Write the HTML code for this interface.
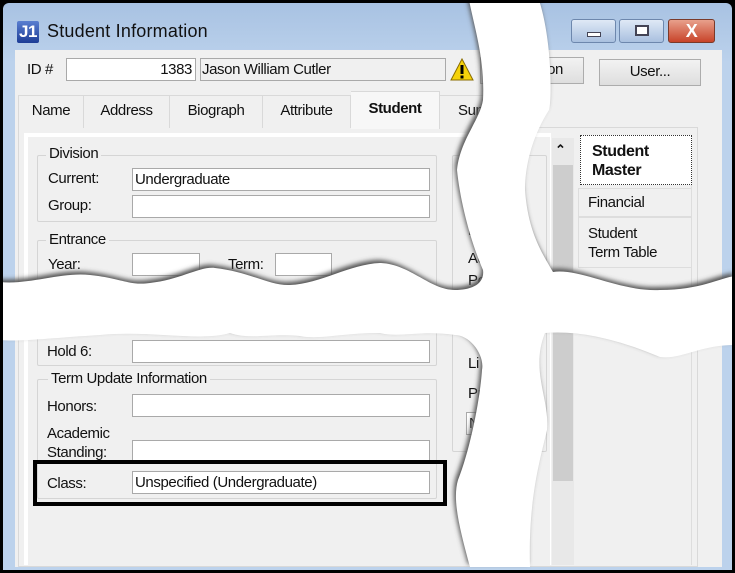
<!DOCTYPE html>
<html><head><meta charset="utf-8"><style>
*{margin:0;padding:0;box-sizing:border-box}
body{width:735px;height:573px;overflow:hidden;background:#000;font-family:"Liberation Sans",sans-serif;font-size:15px;color:#111;letter-spacing:-0.4px}
.a{position:absolute}
.win{left:3px;top:3px;width:729px;height:567px;background:linear-gradient(#a8c2e2,#bcd2ec 60px,#bcd2ec);border-radius:6px 6px 0 0}
.client{left:15px;top:50px;width:707px;height:517px;background:#f0f0f0}
.tb{background:#fff;border:1px solid #a9a9a9;height:23px}
.btn{background:linear-gradient(#f2f2f2,#dedede);border:1px solid #acacac;text-align:center;line-height:24px}
.gb{border:1px solid #d5d5d5;border-radius:2px}
.lg{background:#f0f0f0;padding:0 3px}
.tab{top:95px;height:33px;border-right:1px solid #d9d9d9;text-align:center;line-height:30px;background:#f0f0f0;border-top:1px solid #d9d9d9}
</style></head><body>
<div class="a win"></div>
<div class="a" style="left:17px;top:21px;width:22px;height:22px;background:linear-gradient(#5a7fd0,#1c3c96);color:#fff;font-weight:bold;font-size:17px;line-height:22px;text-align:center;border-radius:2px">J1</div>
<div class="a" style="left:47px;top:21px;font-size:18px;letter-spacing:0.2px">Student Information</div>
<div class="a" style="left:571px;top:19px;width:45px;height:24px;border:1px solid #6d87ad;border-radius:3px;background:linear-gradient(#dfe9f6,#a9c0df)"><div class="a" style="left:15px;top:12px;width:14px;height:5px;background:#fff;border:1px solid #445"></div></div>
<div class="a" style="left:619px;top:19px;width:45px;height:24px;border:1px solid #6d87ad;border-radius:3px;background:linear-gradient(#dfe9f6,#a9c0df)"><div class="a" style="left:15px;top:5px;width:14px;height:11px;background:#fff;border:2px solid #445"></div></div>
<div class="a" style="left:668px;top:19px;width:47px;height:24px;border:1px solid #7a3a2a;border-radius:3px;background:linear-gradient(#e8a08c,#c8442a);color:#fff;font-weight:bold;font-size:18px;text-align:center;line-height:22px">X</div>
<div class="a client"></div>
<div class="a" style="left:27px;top:61px">ID #</div>
<div class="a tb" style="left:66px;top:58px;width:130px;text-align:right;padding-right:3px;line-height:21px">1383</div>
<div class="a tb" style="left:200px;top:58px;width:246px;background:#f0f0f0;padding-left:1px;line-height:21px">Jason William Cutler</div>
<svg class="a" style="left:450px;top:57px" width="24" height="25"><path d="M12 2 L23 23 L1 23Z" fill="#f5d20a" stroke="#8a6d00"/><rect x="10.5" y="8" width="3" height="9" fill="#000"/><rect x="10.5" y="18.5" width="3" height="3" fill="#000"/></svg>
<div class="a btn" style="left:480px;top:57px;width:104px;height:27px;text-align:right;padding-right:20px">Person</div>
<div class="a btn" style="left:599px;top:59px;width:102px;height:27px">User...</div>
<div class="a" style="left:18px;top:127px;width:680px;height:440px;border:1px solid #d9d9d9;background:#f0f0f0"></div>
<div class="a" style="left:24px;top:133px;width:527px;height:432px;background:#fff"></div>
<div class="a" style="left:28px;top:137px;width:522px;height:428px;background:#f0f0f0"></div>
<div class="a tab" style="left:18px;width:66px;border-left:1px solid #d9d9d9">Name</div>
<div class="a tab" style="left:84px;width:86px">Address</div>
<div class="a tab" style="left:170px;width:93px">Biograph</div>
<div class="a tab" style="left:263px;width:88px">Attribute</div>
<div class="a tab" style="left:351px;top:91px;height:38px;width:89px;background:#f7f7f7;font-weight:bold;line-height:34px">Student</div>
<div class="a tab" style="left:440px;width:60px;text-align:left;padding-left:18px">Summary</div>
<div class="a gb" style="left:37px;top:155px;width:400px;height:67px"></div>
<div class="a lg" style="left:46px;top:145px">Division</div>
<div class="a" style="left:48px;top:170px">Current:</div>
<div class="a tb" style="left:132px;top:168px;width:298px;padding-left:2px;line-height:21px">Undergraduate</div>
<div class="a" style="left:48px;top:197px">Group:</div>
<div class="a tb" style="left:132px;top:195px;width:298px"></div>
<div class="a gb" style="left:37px;top:240px;width:400px;height:60px"></div>
<div class="a lg" style="left:46px;top:231px">Entrance</div>
<div class="a" style="left:48px;top:256px">Year:</div>
<div class="a tb" style="left:132px;top:253px;width:68px"></div>
<div class="a" style="left:228px;top:256px">Term:</div>
<div class="a tb" style="left:275px;top:253px;width:57px"></div>
<div class="a gb" style="left:37px;top:320px;width:400px;height:46px"></div>
<div class="a" style="left:47px;top:343px">Hold 6:</div>
<div class="a tb" style="left:132px;top:340px;width:298px"></div>
<div class="a gb" style="left:37px;top:379px;width:400px;height:120px"></div>
<div class="a lg" style="left:48px;top:370px">Term Update Information</div>
<div class="a" style="left:47px;top:398px">Honors:</div>
<div class="a tb" style="left:132px;top:394px;width:298px"></div>
<div class="a" style="left:47px;top:424px;line-height:19px">Academic<br>Standing:</div>
<div class="a tb" style="left:132px;top:440px;width:298px"></div>
<div class="a" style="left:47px;top:475px">Class:</div>
<div class="a tb" style="left:132px;top:471px;width:298px;padding-left:2px;line-height:21px">Unspecified (Undergraduate)</div>
<div class="a" style="left:33px;top:460px;width:414px;height:46px;border:4px solid #000"></div>
<div class="a gb" style="left:452px;top:155px;width:95px;height:297px"></div>
<div class="a" style="left:468px;top:222px">Ed</div>
<div class="a" style="left:468px;top:250px">Ad</div>
<div class="a" style="left:468px;top:272px">Po</div>
<div class="a" style="left:468px;top:355px">Li</div>
<div class="a" style="left:468px;top:385px">Pr</div>
<div class="a tb" style="left:466px;top:412px;width:60px;line-height:21px;padding-left:2px">N</div>
<div class="a" style="left:552px;top:138px;width:22px;height:427px;background:#e8e8e8"></div>
<div class="a" style="left:555px;top:142px;font-size:13px;font-weight:bold">&#8963;</div>
<div class="a" style="left:553px;top:165px;width:20px;height:316px;background:#cdcdcd"></div>
<div class="a" style="left:578px;top:137px;width:114px;height:428px;border-right:1px solid #ddd"></div>
<div class="a" style="left:580px;top:135px;width:112px;height:50px;background:#fff;border:1px dotted #333;font-weight:bold;font-size:16px;line-height:19px;padding:6px 0 0 11px">Student<br>Master</div>
<div class="a" style="left:578px;top:188px;width:114px;height:29px;border:1px solid #ddd;padding:5px 0 0 9px">Financial</div>
<div class="a" style="left:578px;top:217px;width:114px;height:51px;border:1px solid #ddd;padding:6px 0 0 9px;line-height:19px">Student<br>Term Table</div>
<svg class="a" style="left:0;top:0" width="735" height="573">
<defs><filter id="s" x="-5%" y="-5%" width="110%" height="110%"><feGaussianBlur stdDeviation="2.5"/></filter></defs>
<g fill="#555" filter="url(#s)" transform="translate(-2,-3)">
<path id="t" d="M469 0 L539 0 C552 40 552 100 549 110 C530 140 525 170 525 190 C528 230 540 250 553 272 C580 268 620 292 660 290 C700 290 720 278 735 276 L735 345 C700 345 680 360 660 357 C620 340 580 330 545 333 C530 370 550 400 547 430 C540 460 528 500 530 567 L470 567 C460 530 452 500 458 480 C470 450 480 400 482 370 C485 355 470 335 455 335 C420 330 400 338 380 333 C340 333 320 340 300 336 C270 333 250 340 230 333 C200 342 150 330 100 335 C50 338 20 342 0 340 L0 282 C30 285 60 272 90 275 C120 278 130 286 150 283 C180 280 200 266 215 268 C250 272 270 286 290 285 C320 284 350 264 380 263 C410 264 430 290 455 290 C470 290 485 285 483 270 C470 240 460 200 457 170 C460 140 480 120 483 100 C485 60 475 30 469 0Z"/>
</g>
<use href="#t" fill="#fff"/>
</svg>
<div class="a" style="left:0;top:0;width:735px;height:573px;border:3px solid #000;border-radius:2px"></div>
</body></html>
